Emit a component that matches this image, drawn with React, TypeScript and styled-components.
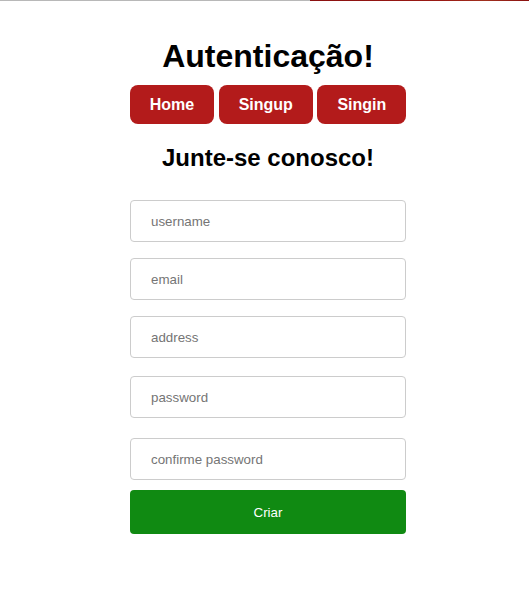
import React from "react";
import styled, { createGlobalStyle } from "styled-components";

const Global = createGlobalStyle`
  html, body { margin: 0; padding: 0; background: #fff; }
  body { font-family: "Liberation Sans", Arial, sans-serif; }
`;

const TopLine = styled.div`
  display: flex;
  height: 1px;
`;

const LineGray = styled.div`
  width: 310px;
  background: #b8b8b8;
`;

const LineRed = styled.div`
  flex: 1;
  background: linear-gradient(90deg, #8a1010, #9a1a14 60%, #a0301e 80%, #8a1010);
`;

const Page = styled.main`
  display: flex;
  flex-direction: column;
  align-items: center;
  padding-left: 7px;
  padding-top: 37px;
`;

const Title = styled.h1`
  margin: 0;
  font-size: 32px;
  line-height: 37px;
  font-weight: bold;
  color: #000;
`;

const Nav = styled.nav`
  display: flex;
  gap: 4.5px;
  margin-top: 10px;
`;

const NavButton = styled.button`
  height: 39px;
  padding: 0 20px;
  border: none;
  border-radius: 8px;
  background: #b31b1b;
  color: #fff;
  font-family: "Liberation Sans", Arial, sans-serif;
  font-size: 16px;
  font-weight: bold;
  cursor: pointer;
`;

const Subtitle = styled.h2`
  margin: 20px 0 0;
  font-size: 24px;
  line-height: 28px;
  font-weight: bold;
  color: #000;
`;

const Form = styled.form`
  display: flex;
  flex-direction: column;
  width: 276px;
  margin-top: 28px;
`;

const Field = styled.input<{ $gap: number }>`
  box-sizing: border-box;
  width: 100%;
  height: 42px;
  margin-top: ${(p) => p.$gap}px;
  padding: 0 20px;
  border: 1px solid #cccccc;
  border-radius: 4px;
  font-family: "Liberation Sans", Arial, sans-serif;
  font-size: 13.333px;
  color: #000;
  background: #fff;
  outline: none;
  &::placeholder { color: #757575; }
`;

const Submit = styled.button`
  box-sizing: border-box;
  width: 100%;
  height: 44px;
  margin-top: 10px;
  border: none;
  border-radius: 4px;
  background: #108a12;
  color: #fff;
  font-family: "Liberation Sans", Arial, sans-serif;
  font-size: 13.333px;
  cursor: pointer;
`;

const fields: { name: string; type: string; gap: number }[] = [
  { name: "username", type: "text", gap: 0 },
  { name: "email", type: "email", gap: 16 },
  { name: "address", type: "text", gap: 16 },
  { name: "password", type: "password", gap: 18 },
  { name: "confirme password", type: "password", gap: 20 },
];

export default function App() {
  return (
    <>
      <Global />
      <TopLine>
        <LineGray />
        <LineRed />
      </TopLine>
      <Page>
        <Title>Autenticação!</Title>
        <Nav>
          <NavButton>Home</NavButton>
          <NavButton>Singup</NavButton>
          <NavButton>Singin</NavButton>
        </Nav>
        <Subtitle>Junte-se conosco!</Subtitle>
        <Form onSubmit={(e) => e.preventDefault()}>
          {fields.map((f) => (
            <Field key={f.name} type={f.type} placeholder={f.name} $gap={f.gap} />
          ))}
          <Submit type="submit">Criar</Submit>
        </Form>
      </Page>
    </>
  );
}
